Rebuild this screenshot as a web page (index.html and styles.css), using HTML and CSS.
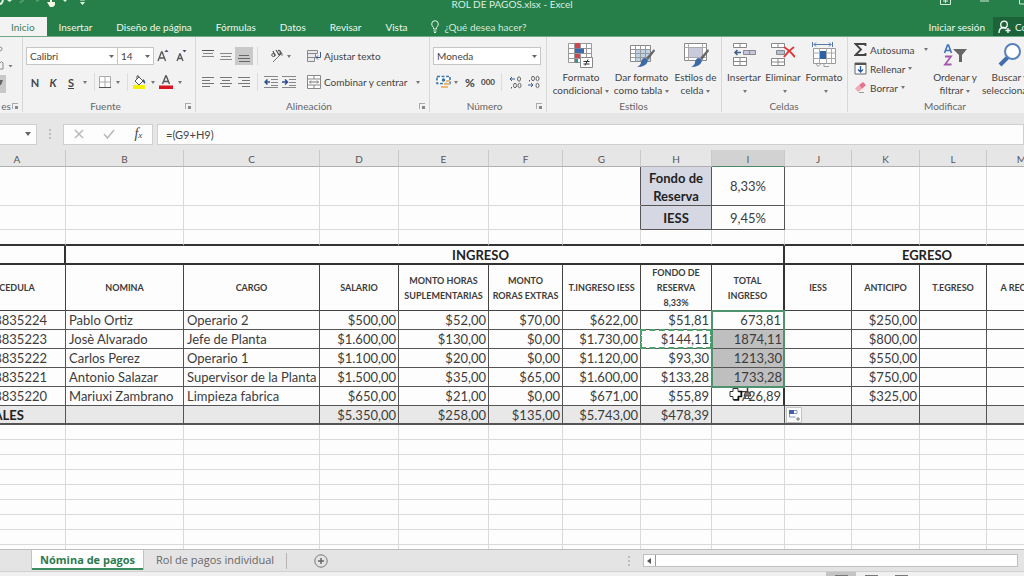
FILE: index.html
```html
<!DOCTYPE html>
<html lang="es">
<head>
<meta charset="utf-8">
<title>ROL DE PAGOS.xlsx - Excel</title>
<link rel="stylesheet" href="styles.css">
</head>
<body>
<div class="app">
  <header class="titlebar">
    <svg class="quick" width="90" height="8" viewBox="0 0 90 8" aria-hidden="true"><path d="M0 4q2 0 3-4" fill="none" stroke="#e4f2e6" stroke-width="2"/><path d="M7 0h5l-2.500 2zM63 0h4l-2 2zM80 2h5l-2.500 3z" fill="#e4f2e6"/><path d="M80 0h5" stroke="#e4f2e6"/><path d="M20 3q1-2 4-3M36 1l3-1" stroke="#559a6c" stroke-width="2" fill="none"/><path d="M47 2h3V0h2v2h3v3l-2 2h-3z" fill="#f6f7e4"/></svg>
    <h1>ROL DE PAGOS.xlsx - Excel</h1>
    <svg class="winctl" width="84" height="8" viewBox="0 0 84 8" aria-hidden="true"><path d="M.5 0v4.500h10V0M5.500 3V0M3 1h5M40 1h9M79.500 0v4H84" fill="none" stroke="#d8ecdd"/></svg>
  </header>
  <nav class="tabs">
    <a href="#inicio" class="active">Inicio</a>
    <a href="#insertar">Insertar</a>
    <a href="#diseno">Diseño de página</a>
    <a href="#formulas">Fórmulas</a>
    <a href="#datos">Datos</a>
    <a href="#revisar">Revisar</a>
    <a href="#vista">Vista</a>
    <a href="#ayuda" class="tell"><svg width="8" height="13" viewBox="0 0 8 13"><path d="M2.500 9V7.500Q.7 6 .7 4a3.300 3.300 0 0 1 6.600 0q0 2-1.800 3.500V9zM2.500 11h3M3 12.500h2" fill="none" stroke="#e4f2e6"/></svg>¿Qué desea hacer?</a>
    <a href="#sesion" class="signin">Iniciar sesión</a>
    <button class="share"><svg width="13" height="14" viewBox="0 0 13 14"><circle cx="6" cy="4.500" r="3.300" fill="none" stroke="#fff" stroke-width="1.300"/><path d="M1 13q0-5 4-5.500 2 0 3.500 1M10 8v5M7.500 10.500h5" fill="none" stroke="#fff" stroke-width="1.300"/></svg>Compartir</button>
  </nav>

  <section class="ribbon" aria-label="Cinta de opciones">
    <div class="group clip">
      <svg width="14" height="56" viewBox="0 0 14 56" aria-hidden="true"><circle cx="0" cy="5" r="2" fill="none" stroke="#8a8f99"/><path d="M8.500 21h4l-2 2.500z" fill="#777"/><path d="M0 19q2-3 3 0v6H0" fill="none" stroke="#888"/><path d="M0 31h6v18H0z" fill="#c8c8c8"/><path d="M0 36h3l-2 5H0z" fill="#666"/></svg>
      <footer><span>es</span><button class="launch" aria-label="Opciones del portapapeles"></button></footer>
    </div>

    <div class="group font">
      <div class="line">
        <select class="box family" aria-label="Fuente"><option>Calibri</option></select><select class="box size" aria-label="Tamaño de fuente"><option>14</option></select>
        <button class="w18" aria-label="Aumentar tamaño"><svg width="12" height="14" viewBox="0 0 12 14"><path d="M1 12L4.500 3h.6L8.600 12M2.200 9h5.200" fill="none" stroke="#555" stroke-width="1.300"/><path d="M7.500 3h4L9.500.500z" fill="#44506a"/></svg></button>
        <button class="w18" aria-label="Reducir tamaño"><svg width="12" height="14" viewBox="0 0 12 14"><path d="M2 12L4.800 5h.4L8 12M3 9.500h4" fill="none" stroke="#555" stroke-width="1.300"/><path d="M7.500 1h4L9.500 3.500z" fill="#44506a"/></svg></button>
      </div>
      <div class="line">
        <button class="w18 glyph"><b>N</b></button><button class="w18 glyph"><b><i>K</i></b></button><button class="w18 glyph"><b><u>S</u></b></button><button class="w10" aria-label="Subrayados"><span class="caret"></span></button>
        <span class="sep"></span>
        <button class="w12" aria-label="Bordes"><svg width="12" height="12" viewBox="0 0 12 12"><path d="M.5.5h11v11H.5zM6 .5v11M.5 6h11" fill="#fff" stroke="#aaa"/><path d="M0 11.500h12" stroke="#555"/></svg></button><button class="w14" aria-label="Más bordes"><span class="caret"></span></button>
        <span class="sep tight"></span>
        <button class="w18" aria-label="Color de relleno"><svg width="14" height="14" viewBox="0 0 14 14"><path d="M1 10h12v4H1z" fill="#f4f000"/><path d="M3 6l4-4 4 4-4 4zM5 4V1q1.500-1 2 1" fill="#fff" stroke="#555"/><path d="M11 4q3 2 2 5l-2-2z" fill="#3b5c8c"/></svg></button><button class="w9" aria-label="Más colores de relleno"><span class="caret"></span></button>
        <button class="w18" aria-label="Color de fuente"><svg width="14" height="14" viewBox="0 0 14 14"><path d="M0 10.500h14V14H0z" fill="#d9161f"/><path d="M3.500 9L6.700 1h.6l3.200 8M4.500 6.500h5" fill="none" stroke="#555" stroke-width="1.400"/></svg></button><button class="w9" aria-label="Más colores de fuente"><span class="caret"></span></button>
      </div>
      <footer><span>Fuente</span><button class="launch" aria-label="Opciones de fuente"></button></footer>
    </div>

    <div class="group align">
      <div class="line">
        <button class="w18" aria-label="Alinear arriba"><svg width="12" height="14" viewBox="0 0 12 14"><path d="M1 4.500h10M0 7.500h12" stroke="#888"/><path d="M0 1.500h12" stroke="#555"/></svg></button><button class="w18" aria-label="Alinear en medio"><svg width="12" height="14" viewBox="0 0 12 14"><path d="M0 4.500h12M1 7.500h10M0 10.500h12" stroke="#888"/></svg></button><button class="w18 on" aria-label="Alinear abajo"><svg width="12" height="14" viewBox="0 0 12 14"><path d="M1 6.500h10M0 9.500h12M1 12.500h11" stroke="#666"/></svg></button>
        <span class="sep"></span>
        <button class="w36" aria-label="Orientación"><svg width="14" height="14" viewBox="0 0 14 14"><path d="M3 13L12 4M12 4v3M12 4H9" fill="none" stroke="#777"/><ellipse cx="3.500" cy="6" rx="1.800" ry="1.500" fill="none" stroke="#555"/><path d="M5 7L3 2M6 1l3 5q3-2 1-4-1-1-2 0" fill="none" stroke="#555" stroke-width="1.200"/></svg><span class="caret"></span></button>
        <button class="wide"><svg width="14" height="14" viewBox="0 0 14 14"><path d="M.5 1.500h10v3H.5zM.5 4.500h8v4h-8zM.5 8.500h7v4h-7z" fill="#e9eaf0" stroke="#888"/><path d="M13.500 3v5.500H9M11 6.500l-2 2 2 2" fill="none" stroke="#3d5a91"/></svg>Ajustar texto</button>
      </div>
      <div class="line">
        <button class="w18" aria-label="Izquierda"><svg width="12" height="12" viewBox="0 0 12 12"><path d="M0 1.500h12M0 4.500h8M0 7.500h12M0 10.500h8" stroke="#777"/></svg></button><button class="w18" aria-label="Centrar"><svg width="12" height="12" viewBox="0 0 12 12"><path d="M0 1.500h12M2 4.500h8M0 7.500h12M2 10.500h8" stroke="#777"/></svg></button><button class="w18" aria-label="Derecha"><svg width="12" height="12" viewBox="0 0 12 12"><path d="M0 1.500h12M4 4.500h8M0 7.500h12M4 10.500h8" stroke="#777"/></svg></button>
        <span class="sep"></span>
        <button class="w18" aria-label="Disminuir sangría"><svg width="14" height="12" viewBox="0 0 14 12"><path d="M0 .5h14M7 3.500h7M7 6.500h7M7 9.500h7M0 11.500h14" stroke="#888"/><path d="M6 6H1M3.500 3.500L1 6l2.500 2.500" fill="none" stroke="#2d4f8f" stroke-width="1.500"/></svg></button><button class="w18" aria-label="Aumentar sangría"><svg width="14" height="12" viewBox="0 0 14 12"><path d="M0 .5h14M7 3.500h7M7 6.500h7M7 9.500h7M0 11.500h14" stroke="#888"/><path d="M0 6h5M3 3.500L5.500 6 3 8.500" fill="none" stroke="#2d4f8f" stroke-width="1.500"/></svg></button>
        <button class="wide"><svg width="14" height="14" viewBox="0 0 14 14"><path d="M.5.500h13v13H.5zM.5 4h13M.5 10h13M7 .5V4M7 10v3.500" fill="#fff" stroke="#888"/><path d="M2.500 7h9M4 5.500L2.500 7 4 8.500M10 5.500L11.500 7 10 8.500" fill="none" stroke="#777"/></svg>Combinar y centrar<span class="caret far"></span></button>
      </div>
      <footer><span>Alineación</span><button class="launch" aria-label="Opciones de alineación"></button></footer>
    </div>

    <div class="group number">
      <div class="line">
        <select class="box format" aria-label="Formato de número"><option>Moneda</option></select>
      </div>
      <div class="line">
        <button class="w28" aria-label="Formato de moneda"><svg width="15" height="14" viewBox="0 0 15 14"><path d="M1 1.500h13v7H1z" fill="#fff" stroke="#3d78ad" stroke-width="1.600" stroke-dasharray="3 1.500"/><circle cx="7.500" cy="5" r="1.800" fill="#3572a8"/><path d="M8 8h6v2H8zM5 11h7v2H5zM10 5h4v2h-4z" fill="#e9b872"/></svg><span class="caret"></span></button><button class="w18 pct">%</button><button class="w18 zeros">000</button>
        <span class="sep"></span>
        <button class="w18" aria-label="Aumentar decimales"><svg width="13" height="14" viewBox="0 0 13 14"><path d="M1 4h5M3 2L1 4l2 2" fill="none" stroke="#3d5a91"/><ellipse cx="10" cy="4" rx="1.500" ry="2.200" fill="none" stroke="#666"/><ellipse cx="6" cy="10.500" rx="1.500" ry="2.200" fill="none" stroke="#666"/><ellipse cx="10.500" cy="10.500" rx="1.500" ry="2.200" fill="none" stroke="#666"/><path d="M2.500 12v1.500" stroke="#555"/></svg></button><button class="w18" aria-label="Disminuir decimales"><svg width="13" height="14" viewBox="0 0 13 14"><path d="M1 10h5M4 8l2 2-2 2" fill="none" stroke="#3d5a91"/><ellipse cx="6" cy="3.500" rx="1.500" ry="2.200" fill="none" stroke="#666"/><ellipse cx="10.500" cy="3.500" rx="1.500" ry="2.200" fill="none" stroke="#666"/><ellipse cx="10.500" cy="10.500" rx="1.500" ry="2.200" fill="none" stroke="#666"/><path d="M2.500 5v1.500" stroke="#555"/></svg></button>
      </div>
      <footer><span>Número</span><button class="launch" aria-label="Opciones de número"></button></footer>
    </div>

    <div class="group styles">
      <div class="bigs">
        <button class="big w62"><svg width="26" height="26" viewBox="0 0 26 26"><path d="M.5 1.500h23v19H.5zM.5 6.500h23M.5 11.500h23M.5 16.500h23M6.500 1.500v19M12.500 1.500v19M18.500 1.500v19" fill="#fff" stroke="#999"/><path d="M7 1h5v5H7zM7 12h5v4H7z" fill="#cf4651"/><path d="M7 6.500h9v4.500H7z" fill="#4068a8"/><path d="M7 17h3v4H7z" fill="#418f90"/><path d="M12.500 15.500h12v10h-12z" fill="#fff" stroke="#888"/><path d="M15.500 19.500h6M15.500 22h6M20 17.500l-3 6" stroke="#333"/></svg><span>Formato<br>condicional<i class="caret"></i></span></button>
        <button class="big w59"><svg width="26" height="26" viewBox="0 0 26 26"><path d="M1.500 3.500h20v16h-20z" fill="#fff" stroke="#888"/><path d="M7 8h14v11H7z" fill="#bcd3e8"/><path d="M1.500 7.500h20M1.500 11.500h20M1.500 15.500h20M6.500 3.500v16M11.500 3.500v16M16.500 3.500v16" stroke="#999"/><path d="M25 7l-8 9 2 2 7-9z" fill="#666"/><path d="M16 16q3 1 3 3-2 6-11 6 4-2 4-5 1-4 4-4z" fill="#3d69a7"/></svg><span>Dar formato<br>como tabla<i class="caret"></i></span></button>
        <button class="big w49"><svg width="26" height="26" viewBox="0 0 26 26"><path d="M1.500 1.500h22v17h-22z" fill="#fff" stroke="#888"/><path d="M6 6h13v9H6z" fill="#c9cadb"/><path d="M1.500 5.500h22M1.500 15.500h22M5.500 1.500v17M19.500 1.500v17" stroke="#aaa"/><path d="M25 7l-8 9 2 2 7-9z" fill="#666"/><path d="M16 16q3 1 3 3-2 6-11 6 4-2 4-5 1-4 4-4z" fill="#3d69a7"/></svg><span>Estilos de<br>celda<i class="caret"></i></span></button>
      </div>
      <footer><span>Estilos</span></footer>
    </div>

    <div class="group cells">
      <div class="bigs">
        <button class="big w38"><svg width="24" height="26" viewBox="0 0 24 26"><path d="M1.500 1.500h13v4h-13zM8 1.500v4M1.500 15.500h13v8h-13zM1.500 19.500h13M8 15.500v8" fill="#fff" stroke="#888"/><path d="M11.500 8.500h12v4h-12zM17.500 8.500v4" fill="#c5c6dc" stroke="#888"/><path d="M9 10.500H3M5.500 8L3 10.500 5.500 13" fill="none" stroke="#426086" stroke-width="1.600"/></svg><span>Insertar<br><i class="caret"></i></span></button>
        <button class="big w40"><svg width="24" height="26" viewBox="0 0 24 26"><path d="M.5 1.500h13v4H.5zM7 1.500v4M.5 16.500h13v7H.5zM.5 20h13M7 16.500v7" fill="#fff" stroke="#888"/><path d="M5.500 8.500h8v4h-8z" fill="#b5c1d0" stroke="#888"/><path d="M13 5q5 3 11 10M23 5q-6 4-10 10" fill="none" stroke="#d9393b" stroke-width="2"/></svg><span>Eliminar<br><i class="caret"></i></span></button>
        <button class="big w42"><svg width="26" height="26" viewBox="0 0 26 26"><path d="M2.500 6.500h22v15h-22zM5 21.500l2 3 3-3M13 21.500v3h5" fill="#fff" stroke="#999"/><path d="M2.500 11h22M2.500 16.500h22M8.500 6.500v15M15.500 6.500v15M20.500 6.500v15" stroke="#aaa"/><path d="M9 9h6v8H9z" fill="#2d62a8"/><path d="M3 2.500h17M5 .5l-2 2 2 2M18 .5l2 2-2 2M1.500 0v5M21.500 0v5" fill="none" stroke="#5878a4"/></svg><span>Formato<br><i class="caret"></i></span></button>
      </div>
      <footer><span>Celdas</span></footer>
    </div>

    <div class="group edit">
      <div class="bigs">
        <div class="stack">
          <button><svg width="13" height="13" viewBox="0 0 13 13"><path d="M11.500 3V1H1.500L7 6.500 1.500 12h10v-2" fill="none" stroke="#444" stroke-width="1.800"/></svg>Autosuma<span class="caret far"></span></button>
          <button><svg width="13" height="13" viewBox="0 0 13 13"><path d="M1 1h11v11H1z" fill="#fff" stroke="#666"/><path d="M1 2h11" stroke="#555" stroke-width="2"/><path d="M6.500 4v6M4 7.500L6.500 10 9 7.500" fill="none" stroke="#2d5f9f" stroke-width="1.400"/></svg>Rellenar<span class="caret"></span></button>
          <button><svg width="13" height="13" viewBox="0 0 13 13"><path d="M5 4l4-3 3 3-4 4z" fill="#e8738f"/><path d="M5 4L1 7.500l3 3.500 4-3z" fill="#f1a9b8"/><path d="M5 11.500h5" stroke="#999"/></svg>Borrar<span class="caret"></span></button>
        </div>
        <button class="big w48"><svg width="24" height="26" viewBox="0 0 24 26"><path d="M1.500 11L4.500 3h1l3 8M2.500 8.500h5" fill="none" stroke="#3f74b5" stroke-width="1.600"/><path d="M2 14.500h6L2 22.500h6.500" fill="none" stroke="#a557b0" stroke-width="1.800"/><path d="M10 7h14l-5 6v7h-3v-7z" fill="#666"/></svg><span>Ordenar y<br>filtrar<i class="caret"></i></span></button>
        <button class="big w62"><svg width="26" height="26" viewBox="0 0 26 26"><path d="M11 15l-8 8" stroke="#3f6fad" stroke-width="4"/><circle cx="15.500" cy="9.500" r="7.500" fill="#fff" stroke="#5781bb" stroke-width="2"/></svg><span>Buscar y<br>seleccionar<i class="caret"></i></span></button>
      </div>
      <footer><span>Modificar</span></footer>
    </div>
  </section>

  <section class="formula">
    <select class="namebox" aria-label="Cuadro de nombres"><option></option></select>
    <span class="dots" aria-hidden="true"></span>
    <div class="fxbox">
      <button aria-label="Cancelar"><svg width="10" height="10" viewBox="0 0 10 10"><path d="M1 1l8 8M9 1L1 9" stroke="#b8b8b8" stroke-width="1.500"/></svg></button>
      <button aria-label="Introducir"><svg width="12" height="10" viewBox="0 0 12 10"><path d="M1 5l3.500 4L11 1" fill="none" stroke="#b8b8b8" stroke-width="1.500"/></svg></button>
      <button class="fx" aria-label="Insertar función"><i>f<small>x</small></i></button>
    </div>
    <input class="expr" aria-label="Barra de fórmulas" value="=(G9+H9)">
  </section>

  <main class="sheet">
    <table>
      <colgroup><col class="c97"><col class="c118"><col class="c136"><col class="c79"><col class="c90"><col class="c74"><col class="c78"><col class="c71"><col class="c73"><col class="c67"><col class="c68"><col class="c67"><col class="c70"><col></colgroup>
      <thead><tr><th>A<th>B<th>C<th>D<th>E<th>F<th>G<th>H<th class="cur">I<th>J<th>K<th>L<th>M<th></tr></thead>
      <tbody>
        <tr class="h39"><td><td><td><td><td><td><td class="edge"><td class="rate">Fondo de Reserva<td class="pc">8,33%<td><td><td><td><td></tr>
        <tr class="h24"><td><td><td><td><td><td><td class="edge"><td class="rate one">IESS<td class="pc">9,45%<td><td><td><td><td></tr>
        <tr class="h16 thick"><td><td><td><td><td><td><td><td><td><td><td><td><td><td></tr>
        <tr class="h19 band"><td class="bar"><td colspan="2"><td colspan="4">INGRESO<td colspan="2" class="bar"><td colspan="4" class="out">EGRESO<td></tr>
        <tr class="heads"><th>CEDULA<th>NOMINA<th>CARGO<th>SALARIO<th>MONTO HORAS SUPLEMENTARIAS<th>MONTO<br>RORAS EXTRAS<th>T.INGRESO IESS<th>FONDO DE<br>RESERVA<br>8,33%<th class="bar">TOTAL<br>INGRESO<th>IESS<th>ANTICIPO<th>T.EGRESO<th>A RECIBIR<th></tr>
        <tr class="data"><td class="id">8835224<td>Pablo Ortiz<td>Operario 2<td>$500,00<td>$52,00<td>$70,00<td>$622,00<td>$51,81<td class="bar anchor">673,81<span class="selection"></span><td><td>$250,00<td><td><td></tr>
        <tr class="data"><td class="id">8835223<td>Josè Alvarado<td>Jefe de Planta<td>$1.600,00<td>$130,00<td>$0,00<td>$1.730,00<td class="anchor">$144,11<span class="marquee"></span><td class="sel">1874,11<td><td>$800,00<td><td><td></tr>
        <tr class="data"><td class="id">8835222<td>Carlos Perez<td>Operario 1<td>$1.100,00<td>$20,00<td>$0,00<td>$1.120,00<td>$93,30<td class="sel">1213,30<td><td>$550,00<td><td><td></tr>
        <tr class="data"><td class="id">8835221<td>Antonio Salazar<td>Supervisor de la Planta<td>$1.500,00<td>$35,00<td>$65,00<td>$1.600,00<td>$133,28<td class="sel">1733,28<td><td>$750,00<td><td><td></tr>
        <tr class="data"><td class="id">8835220<td>Mariuxi Zambrano<td>Limpieza fabrica<td>$650,00<td>$21,00<td>$0,00<td>$671,00<td>$55,89<td class="bar anchor">726,89<svg class="pointer" width="26" height="15" viewBox="0 0 26 15"><path d="M5 1.500h5v3h3v5h-3v3H5v-3H2v-5h3z" fill="#fff" stroke="#333"/><path d="M10.500 4.500h3v5h-3v3.500H5.500" fill="none" stroke="#111" stroke-width="1.500"/><path d="M19.500 0v5" stroke="#333" stroke-width="1.500"/><path d="M16 9l1.500-4h4L23 9z" fill="#8b7374" stroke="#444"/><path d="M15.500 11.500h8M17.500 9v3M20.500 9v3" stroke="#555"/></svg><td><td>$325,00<td><td><td></tr>
        <tr class="data total thick"><td class="label">TOTALES<td><td><td>$5.350,00<td>$258,00<td>$135,00<td>$5.743,00<td>$478,39<td><td class="anchor"><svg class="fillopt" width="16" height="16" viewBox="0 0 16 16"><path d="M.5.500h15v15H.5z" fill="#fafafa" stroke="#c4c4c4"/><path d="M3 3h5v4H3z" fill="#4661a0"/><path d="M8 3.500h3v3H8M3.500 7v3h6" fill="none" stroke="#8a9ac4"/><path d="M12 10v4M10 12h4" stroke="#777"/></svg><td><td><td><td></tr>
        <tr><td><td><td><td><td><td><td><td><td><td><td><td><td><td></tr>
        <tr><td><td><td><td><td><td><td><td><td><td><td><td><td><td></tr>
        <tr><td><td><td><td><td><td><td><td><td><td><td><td><td><td></tr>
        <tr><td><td><td><td><td><td><td><td><td><td><td><td><td><td></tr>
        <tr><td><td><td><td><td><td><td><td><td><td><td><td><td><td></tr>
        <tr><td><td><td><td><td><td><td><td><td><td><td><td><td><td></tr>
        <tr><td><td><td><td><td><td><td><td><td><td><td><td><td><td></tr>
        <tr><td><td><td><td><td><td><td><td><td><td><td><td><td><td></tr>
        <tr><td><td><td><td><td><td><td><td><td><td><td><td><td><td></tr>
      </tbody>
    </table>
  </main>

  <footer class="sheetbar">
    <a href="#nomina" class="stab active">Nómina de pagos</a>
    <a href="#rol" class="stab">Rol de pagos individual</a>
    <span class="tabsep"></span>
    <button class="add" aria-label="Hoja nueva"><svg width="14" height="14" viewBox="0 0 14 14"><circle cx="7" cy="7" r="6.200" fill="none" stroke="#777"/><path d="M7 4v6M4 7h6" stroke="#666" stroke-width="1.500"/></svg></button>
    <span class="dots" aria-hidden="true"></span>
    <div class="hscroll"><button aria-label="Desplazar a la izquierda"><svg width="4" height="6" viewBox="0 0 4 6"><path d="M4 0v6L0 3z" fill="#555"/></svg></button><div class="track"></div></div>
  </footer>
  <div class="status"><span class="view on"></span><span class="view"></span><span class="view"></span></div>
</div>
</body>
</html>
```

FILE: styles.css
```css
* { box-sizing: border-box; }
body { margin: 0; font-family: Lato, "Open Sans", sans-serif; font-size: 10px; color: #444; }
button, input, select { font: inherit; color: inherit; margin: 0; padding: 0; border: 0; background: none; }
a { color: inherit; text-decoration: none; }
svg { display: block; flex: none; }
.app { display: flex; flex-direction: column; height: 100vh; overflow: hidden; background: #e6e6e6; }

/* title and tabs */
.titlebar { display: grid; grid-template-columns: 1fr auto 1fr; height: 17px; flex: none; background: #267f49; color: #dcefe1; }
.titlebar h1 { margin: 0; font-size: 10px; font-weight: 400; line-height: 8px; }
.winctl { justify-self: end; }
.tabs { display: flex; height: 20px; flex: none; background: #267f49; color: #eef8f0; line-height: 20px; white-space: nowrap; overflow: hidden; border-bottom: 1px solid #6fa985; }
.tabs a { padding: 0 12px; }
.tabs .active { height: 20px; padding-left: 11px; background: #f3f3f3; color: #3f7f5a; }
.tabs .tell { display: flex; align-items: center; gap: 5px; padding-left: 12px; color: #d3eadb; }
.tabs .signin { margin-left: auto; padding: 0 8px; }
.share { display: flex; align-items: center; gap: 4px; width: 31px; padding-left: 5px; overflow: hidden; background: #1c6339; }

/* ribbon */
.ribbon { display: flex; height: 76px; flex: none; background: #f2f2f2; overflow: hidden; }
.group { display: flex; flex-direction: column; flex: none; padding: 10px 0 0 3px; margin-bottom: 1px; border-right: 1px solid #d8d8d8; }
.group footer { display: flex; align-items: center; height: 12px; margin-top: auto; padding-right: 4px; color: #666; }
.group footer span { flex: 1; text-align: center; }
.group.clip { width: 23px; padding: 7px 0 0; }
.font { width: 173px; }
.align { width: 234px; }
.number { width: 117px; }
.group.styles { width: 175px; padding-top: 5px; }
.group.cells { width: 126px; padding-top: 5px; }
.group.edit { width: 195px; padding-top: 3px; border: 0; }
.edit .big { padding-top: 2px; }
.launch { width: 6px; height: 6px; border-left: 1px solid #aaa; border-top: 1px solid #aaa; background: linear-gradient(#888, #888) no-repeat right bottom / 3px 3px; }
.line { display: flex; align-items: center; height: 18px; margin-bottom: 8px; }
.line button { display: flex; align-items: center; justify-content: center; height: 18px; flex: none; gap: 3px; }
.box { appearance: none; height: 18px; padding: 0 3px; border: 1px solid #c6c6c6; border-radius: 0; background: #fff url("data:image/svg+xml,%3Csvg xmlns='http://www.w3.org/2000/svg' width='5' height='3'%3E%3Cpath d='M0 0h5L2.500 3z' fill='%23666'/%3E%3C/svg%3E") no-repeat right 3px center; }
.family { width: 92px; }
.size { width: 36px; border-left: 0; }
.format { width: 108px; }
.caret { display: inline-block; flex: none; border: 2px solid transparent; border-top: 3px solid #777; border-bottom: 0; vertical-align: middle; }
.sep { width: 1px; height: 18px; margin: 0 4px; background: #dcdcdc; }
.sep.tight { margin: 0 2px; }
.glyph { font-size: 11px; }
.pct { font-size: 12px; font-weight: 700; }
.zeros { font-size: 8px; font-weight: 700; }
.on { background: #c9c9c9; }
.line .wide { margin-left: 9px; }
.caret.far { margin-left: 6px; }
.w9 { width: 9px; }
.w10 { width: 10px; }
.w12 { width: 12px; }
.w14 { width: 14px; }
.w18 { width: 18px; }
.w28 { width: 28px; }
.w36 { width: 36px; }
.w38 { width: 38px; }
.w40 { width: 40px; }
.w42 { width: 42px; }
.w48 { width: 48px; }
.w49 { width: 49px; }
.w59 { width: 59px; }
.w62 { width: 62px; }
.bigs { display: flex; }
.big { display: flex; flex-direction: column; align-items: center; flex: none; gap: 3px; line-height: 13px; white-space: nowrap; }
.big .caret { margin-left: 3px; }
.stack { display: flex; flex-direction: column; width: 80px; flex: none; padding-left: 3px; }
.stack button { display: flex; align-items: center; gap: 3px; height: 19px; }

/* formula bar */
.formula { display: flex; align-items: center; height: 37px; flex: none; padding: 10px 0 5px; background: #e6e6e6; }
.namebox, .fxbox, .expr { height: 21px; border: 1px solid #cfcfcf; background: #fdfdfd; }
.namebox { appearance: none; width: 37px; border-left: 0; border-radius: 0; background: #fdfdfd url("data:image/svg+xml,%3Csvg xmlns='http://www.w3.org/2000/svg' width='6' height='4'%3E%3Cpath d='M0 0h6L3 4z' fill='%23666'/%3E%3C/svg%3E") no-repeat right 5px center; }
.dots { width: 2px; height: 10px; background: repeating-linear-gradient(#bdbdbd 0 2px, transparent 2px 4px); }
.formula .dots { margin: 0 12px; }
.fxbox { display: flex; align-items: center; justify-content: space-around; width: 90px; }
.fx { font: 14px "Liberation Serif", serif; }
.fx small { font-size: 9px; }
.expr { flex: 1; min-width: 0; margin-left: 4px; padding: 0 8px; font-size: 11px; }

/* sheet */
.sheet { flex: 1; min-height: 0; overflow: hidden; background: #fdfdfd; }
table { width: calc(100% + 31px); min-width: 1120px; margin-left: -31px; table-layout: fixed; border-collapse: separate; border-spacing: 0; }
.c97 { width: 97px; }
.c118 { width: 118px; }
.c136 { width: 136px; }
.c79 { width: 79px; }
.c90 { width: 90px; }
.c74 { width: 74px; }
.c78 { width: 78px; }
.c71 { width: 71px; }
.c73 { width: 73px; }
.c67 { width: 67px; }
.c68 { width: 68px; }
.c70 { width: 70px; }
tr { height: 15px; }
td, th { padding: 0; border: solid #dadada; border-width: 0 1px 1px 0; color: #3c3c3c; }
thead tr { height: 17px; }
thead th { padding-top: 2px; border-color: #c2c2c2 #c8c8c8; border-bottom-color: #b0b0b0; background: #e6e6e6; font-size: 10px; line-height: 12px; font-weight: 400; color: #555; }
thead .cur { background: #d2d2d2; border-bottom: 1px solid #4a8a66; }
.h39 { height: 39px; }
.h24 { height: 24px; }
.h16 { height: 16px; }
.h19 { height: 19px; }
.edge { border-right-color: #555; }
.rate, .pc { border-color: #555; font-size: 13px; line-height: 18px; text-align: center; }
.rate { padding-top: 2px; background: #d5d7e3; font-weight: 700; color: #222; }
.rate.one { padding-top: 0; }
.thick td { border-bottom: 2px solid #333; }
.band td { border-right: 0; border-bottom: 2px solid #333; font-size: 13px; line-height: 16px; font-weight: 700; text-align: center; color: #222; }
.band .bar { border-right: 2px solid #333; }
.band .out { padding-left: 12px; }
.heads { height: 46px; }
.heads th { border-color: #444; font-size: 9px; line-height: 15px; }
.heads .bar, .data .bar { border-right: 2px solid #333; }
.data { height: 19px; }
.data td { padding: 0 2px 0 3px; border-color: #555; font-size: 13px; line-height: 16px; text-align: right; white-space: nowrap; }
.data td:nth-child(2), .data td:nth-child(3), .data .label { text-align: left; }
.data .id { padding-right: 18px; }
.data .sel { background: #bfbfbf; }
.total td { background: #e8e8e8; }
.data .label { font-weight: 700; color: #222; padding: 0; }
.anchor { position: relative; }
.selection { position: absolute; z-index: 1; left: -1px; right: -2px; top: -1px; height: 78px; border: 2px solid #4f9270; }
.marquee { position: absolute; inset: -1px; border: 2px dashed #4f9e6e; }
.pointer { position: absolute; left: 16px; top: 0; }
.fillopt { position: absolute; left: 1px; top: 1px; }

/* sheet tabs and status */
.sheetbar { display: flex; align-items: center; height: 23px; flex: none; padding: 0 6px 0 31px; border-top: 1px solid #bdbdbd; border-bottom: 1px solid #d0d0d0; background: #e4e4e4; font-family: "Open Sans", sans-serif; font-size: 11px; color: #666; white-space: nowrap; }
.stab { height: 20px; margin-bottom: 1px; padding: 0 12px; line-height: 20px; }
.stab.active { padding: 0 8px; border: solid #c2c2c2; border-width: 0 1px; box-shadow: inset 0 -2px #3c8a5f; background: #fff; font-weight: 700; color: #2b7a4d; }
.tabsep { width: 1px; height: 16px; background: #b5b5b5; }
.add { margin-left: 27px; }
.sheetbar .dots { margin-left: auto; margin-right: 13px; }
.hscroll { display: flex; flex: 0 0 38%; height: 13px; border: 1px solid #c0c0c0; background: #fff; }
.hscroll button { display: flex; align-items: center; justify-content: center; width: 12px; border-right: 1px solid #999; }
.track { flex: 1; }
.status { display: flex; height: 4px; flex: none; justify-content: flex-end; padding-right: 108px; background: #f0f0f0; overflow: hidden; }
.view { width: 30px; height: 6px; background: linear-gradient(#777, #777) no-repeat center 3px / 13px 2px; }
.view.on { background-color: #c4c4c4; }
```
